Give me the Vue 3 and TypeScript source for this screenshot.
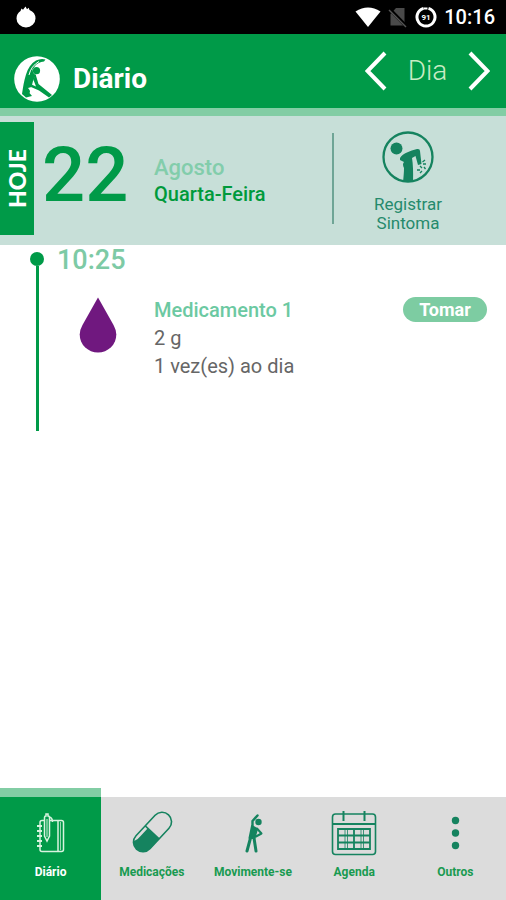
<script setup lang="ts">
import { ref } from 'vue'

type TabId = 'diario' | 'medicacoes' | 'movimente' | 'agenda' | 'outros'

interface Tab {
  id: TabId
  label: string
}

interface Dose {
  name: string
  amount: string
  frequency: string
}

const tabs: Tab[] = [
  { id: 'diario', label: 'Diário' },
  { id: 'medicacoes', label: 'Medicações' },
  { id: 'movimente', label: 'Movimente-se' },
  { id: 'agenda', label: 'Agenda' },
  { id: 'outros', label: 'Outros' },
]

const active = ref<TabId>('diario')

const dose: Dose = {
  name: 'Medicamento 1',
  amount: '2 g',
  frequency: '1 vez(es) ao dia',
}
</script>

<template>
  <div class="app">
    <div class="status">
      <svg class="status-app" viewBox="0 0 20 22" width="20" height="22" aria-hidden="true">
        <path fill="#fff" d="M4.500 5 5.500 2.500 7 3.700 9.500 0.500 11 3.200 12.700 1.800 13.500 4A9.600 9.200 0 0 1 19.500 12.500A9.500 9 0 0 1 0.500 12.500Q0.500 7.500 4.500 5Z" />
      </svg>
      <div class="status-right">
        <svg viewBox="0 0 26 20" width="26" height="20" aria-hidden="true">
          <path fill="#fff" d="M0.500 4.500Q13-3.500 25.500 4.500L13 20Z" />
        </svg>
        <svg viewBox="0 0 20 22" width="20" height="22" aria-hidden="true">
          <path fill="#4a4a4a" d="M8 2h8.500v17.500H2.500V8Z" />
          <path d="M1 2.500 18 20" stroke="#000" stroke-width="3.500" />
          <path d="M1 4 18 21" stroke="#555" stroke-width="1.500" />
        </svg>
        <svg viewBox="0 0 22 22" width="22" height="22" aria-hidden="true">
          <path d="M13.500 2.400A9 9 0 1 1 8.500 2.400" fill="none" stroke="#fff" stroke-width="3" />
          <path d="M8.500 1.500h4v2h-4z" fill="#fff" />
          <text x="11" y="14" class="battery">91</text>
        </svg>
        <span class="clock">10:16</span>
      </div>
    </div>

    <header class="header">
      <svg class="logo" viewBox="0 0 46 46" width="46" height="46" aria-hidden="true">
        <circle cx="23" cy="23" r="22.800" fill="#fff" />
        <g fill="#009a48">
          <path d="M8 38C10 25 12 10 22 4.500Q27 2 31.500 3.500L30 5.500Q24 6 21 10L18.500 13.500Q19 18 22 19L19 25 17.500 31 14 32Q17 35 15.500 37L18 40 12 41.500Z" />
          <circle cx="22.500" cy="14.700" r="3.600" />
          <path d="M21.500 18 24.500 28 38 39 35 41.500 25 34.500 17 31 17.500 28.500 22 30.500 19.500 24Z" />
        </g>
        <path d="M15 19Q17 10 25 5.500" fill="none" stroke="#fff" stroke-width="1" />
      </svg>
      <h1 class="title">Diário</h1>
      <div class="pager">
        <button type="button" class="arrow" aria-label="Anterior">
          <svg viewBox="0 0 22 40" width="22" height="40" aria-hidden="true">
            <path d="M20 2 2.500 20 20 38" />
          </svg>
        </button>
        <span class="period">Dia</span>
        <button type="button" class="arrow" aria-label="Próximo">
          <svg viewBox="0 0 22 40" width="22" height="40" aria-hidden="true">
            <path d="M2 2 19.500 20 2 38" />
          </svg>
        </button>
      </div>
    </header>

    <section class="day">
      <div class="today"><span>HOJE</span></div>
      <div class="number">22</div>
      <div class="date">
        <p class="month">Agosto</p>
        <p class="weekday">Quarta-Feira</p>
      </div>
      <button type="button" class="symptom">
        <svg viewBox="0 0 52 52" width="52" height="52" aria-hidden="true">
          <circle cx="26" cy="26" r="24.500" fill="none" stroke="#15835f" stroke-width="2.300" />
          <circle cx="14.500" cy="17.500" r="6" fill="#15835f" />
          <path fill="#15835f" d="M18 27C21 22 28 20 35 18Q38 17.500 38 20L39.500 33 36 34 33.500 25 30 27Q31.500 36 31 51H21Q22 42 22 37Q20 33 22 31L18 29Z" />
          <path d="M43 29 40.500 31M44 33 41 33M38 35 40 37M42 36 43.500 38M35 39 38 39M38 42 40 40" fill="none" stroke="#15835f" stroke-width="1.300" />
        </svg>
        <span>Registrar<br />Sintoma</span>
      </button>
    </section>

    <main class="timeline">
      <div class="rail"><i class="dot"></i><i class="line"></i></div>
      <article class="entry">
        <h2 class="time">10:25</h2>
        <div class="dose">
          <svg class="drop" viewBox="0 0 38 56" width="38" height="56" aria-hidden="true">
            <path fill="#70187f" d="M19 0.500 34.500 28Q37.300 33 37.300 37.500A18.300 18 0 0 1 0.700 37.500Q0.700 33 3.500 28Z" />
          </svg>
          <div class="info">
            <h3 class="name">{{ dose.name }}</h3>
            <p>{{ dose.amount }}</p>
            <p>{{ dose.frequency }}</p>
          </div>
          <button type="button" class="take">Tomar</button>
        </div>
      </article>
    </main>

    <nav class="tabs">
      <button
        v-for="tab in tabs"
        :key="tab.id"
        type="button"
        class="tab"
        :class="{ active: active === tab.id }"
        @click="active = tab.id"
      >
        <svg class="tab-icon" viewBox="0 0 48 48" width="48" height="48" aria-hidden="true">
          <g v-if="tab.id === 'diario'" fill="none" stroke="currentColor" stroke-width="1.500">
            <rect x="13" y="11.500" width="23.500" height="31" rx="2" />
            <path d="M31 11.500v31" stroke-width="1.500" />
            <path d="M33.500 13v28" stroke-width="0.700" />
            <path d="M10 17h5M10 22h5M10 27h5M10 32h5M10 37h5" stroke-width="1.800" />
            <path fill="#009a48" d="M17.500 10V8.500q0-1.500 1.500-1.500V5h2V7Q22.500 7 22.500 8.500V27l-2.500 5L17.500 27Z" />
            <path d="M20 10v18" stroke-width="1" />
            <path d="M22.500 8q3 1 3 5" />
          </g>
          <g v-else-if="tab.id === 'medicacoes'" transform="rotate(43 24.500 23)">
            <rect x="15" y="-0.500" width="19" height="47" rx="9.500" fill="none" stroke="currentColor" stroke-width="1.600" />
            <path fill="currentColor" d="M18.500 23.500H34V37A9.500 9.500 0 0 1 17 42.500Q19 39 18.500 34Z" />
            <path d="M15 23.500H34" stroke="currentColor" stroke-width="1.500" />
          </g>
          <g v-else-if="tab.id === 'movimente'" fill="none" stroke="currentColor" stroke-linecap="round" stroke-linejoin="round">
            <circle cx="29.500" cy="13" r="3.200" fill="currentColor" stroke="none" />
            <path d="M23.500 19 23.500 12 28.500 6.500" stroke-width="2.400" />
            <path fill="currentColor" d="M23 17 28 20 25.500 29H20.500Z" stroke-width="2" />
            <path d="M28 19.500 32.500 24.500 27 27.500" stroke-width="2" />
            <path d="M21.500 29 18 42M25 29 27 42" stroke-width="3" />
          </g>
          <g v-else-if="tab.id === 'agenda'" fill="none" stroke="currentColor" stroke-width="2">
            <rect x="2.500" y="5" width="43" height="40.500" rx="3" stroke-width="1.600" />
            <path d="M3 15h42" stroke-width="1.800" />
            <path d="M13.500 2v10M34.500 2v10" />
            <path d="M8 20h32v20H8ZM8 26.500h32M8 33.500h32M24 20v20" stroke-width="1.800" />
            <path d="M15 20v20M17.500 20v20M31 20v20M33.500 20v20" stroke-width="0.800" />
          </g>
          <g v-else fill="currentColor">
            <circle cx="24.500" cy="11.500" r="3.700" />
            <circle cx="24.500" cy="24" r="3.700" />
            <circle cx="24.500" cy="36.500" r="3.700" />
          </g>
        </svg>
        <span>{{ tab.label }}</span>
      </button>
    </nav>
  </div>
</template>

<style>
body {
  margin: 0;
  background: #fff;
}
</style>

<style scoped>
.app {
  display: flex;
  flex-direction: column;
  min-height: 100vh;
  font-family: Roboto, "Noto Sans", sans-serif;
  background: #fff;
}

h1,
h2,
h3,
p {
  margin: 0;
}

button {
  margin: 0;
  padding: 0;
  border: 0;
  background: none;
  font: inherit;
  color: inherit;
  cursor: pointer;
}

svg {
  display: block;
  flex: none;
}

.status {
  display: flex;
  align-items: center;
  justify-content: space-between;
  height: 34px;
  padding: 0 11px 0 16px;
  background: #000;
  color: #fff;
}

.status-right {
  display: flex;
  align-items: center;
  gap: 7px;
}

.battery {
  font-size: 8px;
  font-weight: 700;
  text-anchor: middle;
  fill: #fff;
}

.clock {
  font-size: 20px;
  font-weight: 500;
  line-height: 24px;
}

.header {
  display: flex;
  align-items: center;
  height: 74px;
  padding: 0 16px 0 14px;
  border-bottom: 8px solid #82cda4;
  background: #009a48;
  color: #fff;
}

.logo {
  margin-top: 16px;
}

.title {
  margin: 16px 0 0 13px;
  font-size: 28px;
  font-weight: 700;
  line-height: 32px;
}

.pager {
  display: flex;
  align-items: center;
  gap: 19px;
  margin-left: auto;
}

.arrow path {
  fill: none;
  stroke: #fff;
  stroke-width: 4;
}

.period {
  min-width: 43px;
  font-size: 28px;
  font-weight: 300;
  line-height: 36px;
  text-align: center;
  color: #c9ecc4;
}

.day {
  display: flex;
  align-items: flex-start;
  height: 129px;
  background: #c7dfd8;
}

.today {
  display: flex;
  align-items: center;
  justify-content: center;
  width: 34px;
  height: 113px;
  margin-top: 6px;
  background: #009a48;
  color: #fff;
  font-family: Lato, sans-serif;
  font-size: 23px;
  font-weight: 900;
  line-height: 34px;
}

.today span {
  writing-mode: vertical-rl;
  transform: rotate(180deg);
}

.number {
  width: 112px;
  margin: 14px 0 0 8px;
  font-size: 76px;
  font-weight: 500;
  line-height: 90px;
  color: #009a48;
}

.date {
  flex: 1;
  margin-top: 38px;
  font-weight: 500;
  line-height: 27px;
}

.month {
  font-size: 22px;
  color: #82cdab;
}

.weekday {
  font-size: 20px;
  color: #009a3c;
}

.symptom {
  display: flex;
  flex-direction: column;
  align-items: center;
  gap: 12px;
  width: 174px;
  height: 91px;
  margin-top: 17px;
  padding-right: 24px;
  box-sizing: border-box;
  border-left: 2px solid #6fa596;
  font-size: 17px;
  line-height: 19px;
  text-align: center;
  color: #258a6c;
}

.symptom svg {
  margin-top: -2px;
}

.timeline {
  display: flex;
  flex: 1;
  align-items: flex-start;
  padding-left: 30px;
}

.rail {
  display: flex;
  flex-direction: column;
  align-items: center;
  width: 14px;
  height: 179px;
  margin-top: 7px;
}

.dot {
  flex: none;
  width: 14px;
  height: 14px;
  border-radius: 50%;
  background: #009a48;
}

.line {
  flex: 1;
  width: 3px;
  background: #009a48;
}

.entry {
  flex: 1;
  padding: 0 19px 0 13px;
}

.time {
  font-size: 27px;
  font-weight: 500;
  line-height: 30px;
  color: #7dcaa5;
}

.dose {
  display: flex;
  align-items: flex-start;
  padding-top: 21px;
}

.drop {
  margin: 1px 37px 0 22px;
}

.info {
  flex: 1;
  font-size: 20px;
  line-height: 28px;
  color: #666;
}

.name {
  font-size: 20px;
  font-weight: 500;
  color: #6cc9a2;
}

.take {
  width: 84px;
  height: 25px;
  margin-top: 1px;
  border-radius: 13px;
  background: #7dcca2;
  color: #fff;
  font-size: 18px;
  font-weight: 700;
  line-height: 25px;
}

.tabs {
  display: grid;
  grid-template-columns: repeat(5, 1fr);
  align-items: end;
}

.tab {
  display: flex;
  flex-direction: column;
  align-items: center;
  gap: 7px;
  height: 103px;
  padding-top: 12px;
  box-sizing: border-box;
  background: #dcdcdc;
  font-size: 12px;
  font-weight: 700;
  line-height: 16px;
  color: #189a50;
}

.tab-icon {
  color: #15835f;
}

.tab.active {
  height: 112px;
  border-top: 9px solid #82cda4;
  background: #009a48;
  color: #fff;
}

.tab.active .tab-icon {
  color: #d8f3df;
}
</style>
